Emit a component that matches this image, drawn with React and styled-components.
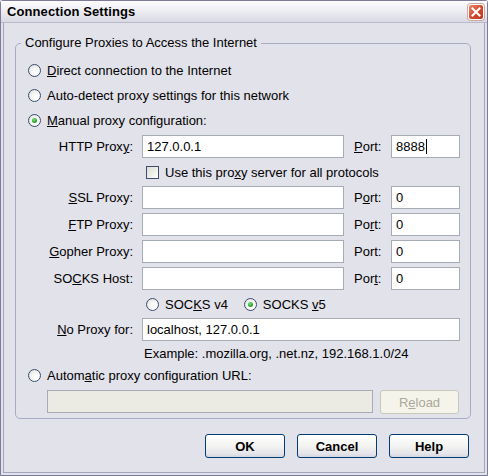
import React from 'react';
import styled, { createGlobalStyle } from 'styled-components';

const GlobalStyle = createGlobalStyle`
  html, body {
    margin: 0;
    padding: 0;
    background: #e2e2ea;
  }
  body {
    font-family: "Liberation Sans", Arial, sans-serif;
    font-size: 13px;
    color: #000;
  }
`;

const Window = styled.div`
  width: 488px;
  height: 476px;
  box-sizing: border-box;
  border: 1px solid #7c7c98;
  border-radius: 3px 3px 0 0;
  background: #e2e2ea;
  display: flex;
  flex-direction: column;
`;

const TitleBar = styled.div`
  height: 21px;
  flex: none;
  display: flex;
  align-items: center;
  justify-content: space-between;
  padding: 0 3px 0 6px;
  background: linear-gradient(#fdfdfe 0%, #eeeef4 45%, #d9d9e3 100%);
  border-bottom: 1px solid #b9b9cc;
`;

const Title = styled.span`
  font-weight: bold;
  font-size: 13px;
  letter-spacing: 0.1px;
`;

const CloseBox = styled.div`
  width: 14px;
  height: 14px;
  border: 1px solid #fff;
  border-radius: 3px;
  background: linear-gradient(135deg, #e98a73 0%, #d4462b 55%, #b83a22 100%);
  box-shadow: 0 0 0 1px #c9a9a0;
  display: flex;
  align-items: center;
  justify-content: center;
`;

const Body = styled.div`
  flex: 1;
  margin: 0 2px 2px 2px;
  border: 1px solid #a3a3ba;
  border-top: none;
  padding: 12px 13px 0 11px;
  display: flex;
  flex-direction: column;
`;

const Group = styled.fieldset`
  margin: 0;
  padding: 9px 8px 5px 12px;
  border: 1px solid #a7abc6;
  border-radius: 5px;
  display: flex;
  flex-direction: column;
  gap: 4px;
  min-width: 0;
`;

const Legend = styled.legend`
  padding: 0 4px 0 4px;
  margin-left: -7px;
  line-height: 16px;
  height: 16px;
`;

const OptionRow = styled.label`
  height: ${p => p.$h || 21}px;
  display: flex;
  align-items: center;
  gap: 6px;
  padding-left: ${p => p.$indent || 0}px;
`;

const Radio = styled.span`
  width: 11px;
  height: 11px;
  flex: none;
  border-radius: 50%;
  border: 1px solid #3c4d6e;
  background: radial-gradient(circle at 65% 65%, #ffffff 20%, #dcdcd4 100%);
  display: flex;
  align-items: center;
  justify-content: center;

  &::after {
    content: '';
    display: ${p => (p.$on ? 'block' : 'none')};
    width: 5px;
    height: 5px;
    border-radius: 50%;
    background: radial-gradient(circle at 40% 35%, #7fe07f 0%, #2aa52a 60%, #1e871e 100%);
  }
`;

const Check = styled.span`
  width: 11px;
  height: 11px;
  flex: none;
  border: 1px solid #3c4d6e;
  background: linear-gradient(135deg, #dcdcd4 0%, #f4f4f0 70%, #ffffff 100%);
`;

const ProxyRow = styled.div`
  display: grid;
  grid-template-columns: 105px 202px 29px 69px;
  column-gap: 9px;
  align-items: center;
  min-height: ${p => p.$h || 23}px;
`;

const RowLabel = styled.span`
  text-align: ${p => (p.$left ? 'left' : 'right')};
  padding-left: ${p => (p.$left ? 1 : 0)}px;
  white-space: nowrap;
`;

const Field = styled.div`
  height: 23px;
  box-sizing: border-box;
  border: 1px solid #a6acb6;
  background: ${p => (p.$disabled ? '#ebebe4' : '#ffffff')};
  display: flex;
  align-items: center;
  padding: 0 4px;
  white-space: nowrap;
  overflow: hidden;
  flex: ${p => (p.$grow ? 1 : 'none')};
`;

const Caret = styled.span`
  display: inline-block;
  width: 1px;
  height: 15px;
  background: #000;
  margin-left: 1px;
`;

const Span = styled.div`
  grid-column: 2 / span 3;
  display: flex;
  align-items: center;
  gap: ${p => p.$gap || 0}px;
  padding-left: ${p => p.$pad || 0}px;
`;

const Inline = styled.label`
  display: flex;
  align-items: center;
  gap: 6px;
`;

const Hint = styled.div`
  grid-column: 2 / span 3;
  padding-left: 2px;
`;

const UrlRow = styled.div`
  height: 23px;
  display: flex;
  gap: 7px;
  padding-left: 19px;
  padding-right: 3px;
`;

const Btn = styled.button`
  width: ${p => p.$w || 80}px;
  height: 24px;
  box-sizing: border-box;
  font-family: "Liberation Sans", Arial, sans-serif;
  font-size: 13px;
  font-weight: ${p => (p.$disabled ? 'normal' : 'bold')};
  color: ${p => (p.$disabled ? '#aca899' : '#000')};
  border: 1px solid ${p => (p.$disabled ? '#c9c7ba' : '#003c74')};
  border-radius: 3px;
  background: ${p =>
    p.$disabled
      ? '#f5f4ea'
      : 'linear-gradient(#ffffff 0%, #f3f3f1 50%, #e4e4ea 85%, #d5d6e0 100%)'};
  padding: 0;
  cursor: default;
`;

const Buttons = styled.div`
  display: flex;
  justify-content: flex-end;
  gap: 12px;
  margin-top: 15px;
  padding-right: 2px;
`;

const Radios = [
  { key: 'direct', label: <><u>D</u>irect connection to the Internet</> },
  { key: 'auto', label: <>Auto-detect proxy settings for this network</> },
  { key: 'manual', label: <><u>M</u>anual proxy configuration:</>, on: true },
];

const proxies = [
  { label: <><u>S</u>SL Proxy:</>, port: <>P<u>o</u>rt:</> },
  { label: <><u>F</u>TP Proxy:</>, port: <>Po<u>r</u>t:</> },
  { label: <><u>G</u>opher Proxy:</>, port: <>Port:</> },
  { label: <>SO<u>C</u>KS Host:</>, port: <>Por<u>t</u>:</> },
];

export default function App() {
  return (
    <>
      <GlobalStyle />
      <Window>
        <TitleBar>
          <Title>Connection Settings</Title>
          <CloseBox>
            <svg width="10" height="10" viewBox="0 0 10 10">
              <path d="M1.5 1.5 L8.5 8.5 M8.5 1.5 L1.5 8.5" stroke="#fff" strokeWidth="2" strokeLinecap="square" />
            </svg>
          </CloseBox>
        </TitleBar>
        <Body>
          <Group>
            <Legend>Configure Proxies to Access the Internet</Legend>
            {Radios.map(r => (
              <OptionRow key={r.key}>
                <Radio $on={r.on} />
                <span>{r.label}</span>
              </OptionRow>
            ))}
            <ProxyRow>
              <RowLabel>HTTP Prox<u>y</u>:</RowLabel>
              <Field>127.0.0.1</Field>
              <RowLabel $left><u>P</u>ort:</RowLabel>
              <Field>8888<Caret /></Field>
            </ProxyRow>
            <ProxyRow $h={20}>
              <Span $pad={4}>
                <Inline>
                  <Check />
                  <span>Use this pro<u>x</u>y server for all protocols</span>
                </Inline>
              </Span>
            </ProxyRow>
            {proxies.map((p, i) => (
              <ProxyRow key={i}>
                <RowLabel>{p.label}</RowLabel>
                <Field />
                <RowLabel $left>{p.port}</RowLabel>
                <Field>0</Field>
              </ProxyRow>
            ))}
            <ProxyRow $h={20}>
              <Span $pad={4} $gap={16}>
                <Inline>
                  <Radio />
                  <span>SOC<u>K</u>S v4</span>
                </Inline>
                <Inline>
                  <Radio $on />
                  <span>SOCKS <u>v</u>5</span>
                </Inline>
              </Span>
            </ProxyRow>
            <ProxyRow>
              <RowLabel><u>N</u>o Proxy for:</RowLabel>
              <Span>
                <Field $grow>localhost, 127.0.0.1</Field>
              </Span>
            </ProxyRow>
            <ProxyRow $h={16}>
              <Hint>Example: .mozilla.org, .net.nz, 192.168.1.0/24</Hint>
            </ProxyRow>
            <OptionRow>
              <Radio />
              <span>Autom<u>a</u>tic proxy configuration URL:</span>
            </OptionRow>
            <UrlRow>
              <Field $grow $disabled />
              <Btn $disabled $w={79}>R<u>e</u>load</Btn>
            </UrlRow>
          </Group>
          <Buttons>
            <Btn $w={80}>OK</Btn>
            <Btn $w={80}>Cancel</Btn>
            <Btn $w={80}>Help</Btn>
          </Buttons>
        </Body>
      </Window>
    </>
  );
}
